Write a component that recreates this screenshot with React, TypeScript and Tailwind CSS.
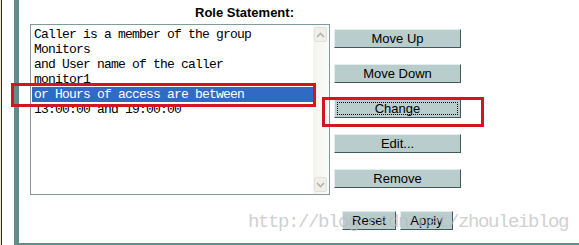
import React from 'react';

const lines = [
  'Caller is a member of the group',
  'Monitors',
  'and User name of the caller',
  'monitor1',
  'or Hours of access are between',
  '13:00:00 and 19:00:00',
];

const SELECTED = 4;

const btn =
  "flex items-center justify-center h-[19px] bg-[#b9cdcd] border border-t-[#e4eeee] border-l-[#e4eeee] border-b-[#3d5b5b] border-r-[#3d5b5b] text-[13px] leading-none text-black font-['Liberation_Sans',Arial,sans-serif]";

const Chevron: React.FC<{ down?: boolean }> = ({ down }) => (
  <svg width="9" height="6" viewBox="0 0 9 6" className="block">
    <path
      d={down ? 'M1 1 L4.5 4.5 L8 1' : 'M1 5 L4.5 1.5 L8 5'}
      fill="none"
      stroke="#b3b3ab"
      strokeWidth="1.6"
    />
  </svg>
);

const App: React.FC = () => {
  return (
    <div className="relative w-[579px] h-[245px] overflow-hidden bg-white flex">
      {/* borda esquerda */}
      <div className="w-px bg-[#ece9cf]" />
      <div className="w-px bg-[#2a2a22]" />
      <div className="w-[12px] bg-white" />
      <div className="w-[5px] bg-[#5f8d89]" />

      <div className="flex-1 border-b-2 border-[#5f8d89] flex flex-col">
        {/* título */}
        <div className="pl-[176px] pt-[5px] text-[13px] leading-[15px] font-bold text-black font-['Liberation_Sans',Arial,sans-serif]">
          Role Statement:
        </div>

        <div className="flex mt-[4px] pl-[11px]">
          {/* lista */}
          <div className="w-[300px] h-[171px] border border-[#7f9b9b] flex bg-white">
            <div className="flex-1 pt-[2px] pl-px">
              {lines.map((l, i) => (
                <div
                  key={i}
                  className={`h-[15px] pl-[2px] text-[13px] leading-[15px] tracking-[-0.8px] whitespace-pre font-['Liberation_Mono','DejaVu_Sans_Mono',monospace] ${
                    i === SELECTED ? 'bg-[#316ac5] text-white' : 'text-black'
                  }`}
                >
                  {l}
                </div>
              ))}
            </div>
            {/* barra de rolagem */}
            <div className="w-[16px] bg-gradient-to-r from-[#f4f3ee] to-[#fbfbf8] flex flex-col justify-between py-[2px] pr-px">
              <div className="h-[15px] mx-px rounded-[2px] bg-[#efeee8] border border-[#e3e1d7] flex items-center justify-center">
                <Chevron />
              </div>
              <div className="h-[15px] mx-px rounded-[2px] bg-[#efeee8] border border-[#e3e1d7] flex items-center justify-center">
                <Chevron down />
              </div>
            </div>
          </div>

          {/* botões */}
          <div className="ml-[4px] pt-[5px] flex flex-col gap-[16px]">
            <div className={`${btn} w-[127px]`}>Move Up</div>
            <div className={`${btn} w-[127px]`}>Move Down</div>
            <div className={`${btn} w-[127px] p-[2px]`}>
              <div className="w-full h-full border border-dotted border-black flex items-center justify-center">
                Change
              </div>
            </div>
            <div className={`${btn} w-[127px]`}>Edit...</div>
            <div className={`${btn} w-[127px]`}>Remove</div>
          </div>
        </div>

        <div className="flex gap-[4px] mt-[16px] pl-[323px]">
          <div className={`${btn} w-[54px]`}>Reset</div>
          <div className={`${btn} w-[53px]`}>Apply</div>
        </div>
      </div>

      {/* marca d'água */}
      <div className="absolute left-[248px] top-[210px] pointer-events-none text-[19px] leading-[24px] tracking-[-1.4px] text-[#bdbdbd] opacity-70 whitespace-pre font-['Liberation_Mono',monospace]">
        http://blog.csdn.net/zhouleiblog
      </div>

      {/* destaques vermelhos */}
      <div className="absolute left-[11px] top-[83px] w-[305px] h-[24px] border-[3px] border-[#d3161e] pointer-events-none" />
      <div className="absolute left-[322px] top-[97px] w-[162px] h-[30px] border-[3px] border-[#d3161e] pointer-events-none" />
    </div>
  );
};

export default App;
